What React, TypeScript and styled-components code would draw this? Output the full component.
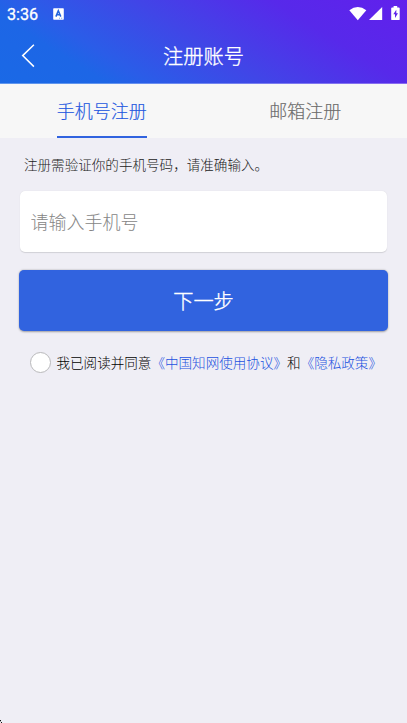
import React from "react";
import styled, { createGlobalStyle } from "styled-components";

const GlobalStyle = createGlobalStyle`
  *, *::before, *::after { box-sizing: border-box; }
  html, body, #root { height: 100%; }
  body {
    margin: 0;
    overflow: hidden;
    background: #efeef5;
    font-family: Roboto, "Noto Sans CJK SC", sans-serif;
  }
`;

const Page = styled.div`
  display: flex;
  flex-direction: column;
  height: 100%;
  background: #efeef5;
`;

const Header = styled.header`
  flex: none;
  height: 84px;
  display: flex;
  flex-direction: column;
  color: #fff;
  border-bottom: 1px solid rgba(255, 255, 255, 0.3);
  background: linear-gradient(32deg, #1a69e6 0%, #1d66e6 20%, #2a5de8 28%, #4145e7 50%, #5729ea 75%, #6120ec 100%);
  background-origin: border-box;
`;

const StatusBar = styled.div`
  height: 28px;
  display: flex;
  align-items: center;
  padding: 0 5px 0 7px;
`;

const Clock = styled.span`
  width: 46px;
  font-size: 16.2px;
  font-weight: 400;
  line-height: 28px;
  padding-top: 1px;
  -webkit-text-stroke: 0.3px currentColor;
`;

const StatusIcons = styled.div`
  display: flex;
  align-items: center;
  margin-left: auto;
  height: 28px;
`;

const TitleBar = styled.div`
  height: 56px;
  display: grid;
  grid-template-columns: 60px 1fr 60px;
  align-items: center;
`;

const BackButton = styled.button`
  display: flex;
  padding: 0 0 0 21px;
  border: 0;
  color: inherit;
  background: none;
`;

const Title = styled.h1`
  margin: 0;
  padding-top: 2px;
  font-size: 20.2px;
  font-weight: 300;
  line-height: 54px;
  text-align: center;
  -webkit-text-stroke: 0.35px currentColor;
`;

const Tabs = styled.nav`
  flex: none;
  height: 54px;
  display: grid;
  grid-template-columns: 1fr 1fr;
  justify-items: center;
  background: #f7f7f7;
`;

const Tab = styled.button<{ $active?: boolean }>`
  height: 54px;
  padding: 3px 0 0;
  border: 0;
  border-bottom: 2px solid ${(p) => (p.$active ? "#3163df" : "transparent")};
  background: none;
  font-family: inherit;
  font-size: 18px;
  font-weight: 300;
  line-height: 49px;
  color: ${(p) => (p.$active ? "#2458df" : "#6c6c6c")};
  -webkit-text-stroke: 0.15px currentColor;
`;

const Form = styled.main`
  display: flex;
  flex-direction: column;
  padding: 0 19px;
`;

const Hint = styled.p`
  margin: 15px 0 15px 5px;
  font-size: 13.57px;
  font-weight: 300;
  line-height: 24px;
  color: #222;
`;

const PhoneInput = styled.input`
  height: 61px;
  margin: -1px 0 0 1px;
  width: 367px;
  padding: 2px 10.5px 0;
  border: 0;
  border-radius: 5px;
  outline: none;
  background: #fff;
  box-shadow: 0 0.5px 1px rgba(0, 0, 0, 0.13);
  font-family: inherit;
  font-size: 18px;
  font-weight: 300;
  color: #333;
  &::placeholder {
    color: #858585;
    opacity: 1;
  }
`;

const NextButton = styled.button`
  height: 61px;
  margin-top: 18px;
  padding: 0;
  border: 0;
  border-radius: 5px;
  background: #3163df;
  box-shadow: 0 0.5px 2px rgba(0, 0, 0, 0.34);
  font-family: inherit;
  font-size: 20.2px;
  font-weight: 300;
  color: #fff;
  -webkit-text-stroke: 0.35px currentColor;
`;

const Agreement = styled.label`
  display: flex;
  align-items: center;
  height: 24px;
  margin: 20px 0 0 11px;
  font-size: 13.57px;
  font-weight: 300;
  line-height: 24px;
  white-space: nowrap;
  color: #000;
`;

const Radio = styled.span`
  flex: none;
  width: 21px;
  height: 21px;
  margin: -2px 5.5px 0 0;
  border: 1px solid #b9b9bb;
  border-radius: 50%;
  background: #fff;
`;

const Link = styled.span`
  color: #1c52e0;
`;

const CornerMark = styled.svg`
  position: fixed;
  left: 0;
  bottom: 0;
`;

const InputMethodIcon = () => (
  <svg width="11" height="12" viewBox="0 0 11 12">
    <rect x="0.2" y="0.3" width="10.6" height="11.4" rx="0.7" fill="#fff" />
    <path d="M2.9 8.6 5.3 2.7 7.8 8.6M3.8 6.7h3" fill="none" stroke="#2465dc" strokeWidth="1.5" />
    <path d="M6.2 10.2h.8M8.2 10.2h1" stroke="#2465dc" strokeWidth="0.7" />
  </svg>
);

const StatusGlyphs = () => (
  <svg width="53" height="16" viewBox="0 0 53 16" fill="#fff">
    <path d="M0.3 4.2Q8.8-2.1 17.3 4.2L8.8 14.2Z" />
    <path d="M33.2 1v13.1H20z" />
    <path
      fillRule="evenodd"
      d="M44.6 0h3.6v1.4h1.6q.9 0 .9.9v10.9q0 .9-.9.9h-6.7q-.9 0-.9-.9V2.3q0-.9.9-.9h1.5zM47.3 3.7 44.3 8.3h1.7v3.6l3-4.7h-1.7z"
    />
  </svg>
);

export default function App() {
  return (
    <>
      <GlobalStyle />
      <Page>
        <Header>
          <StatusBar>
            <Clock>3:36</Clock>
            <InputMethodIcon />
            <StatusIcons>
              <StatusGlyphs />
            </StatusIcons>
          </StatusBar>
          <TitleBar>
            <BackButton aria-label="返回">
              <svg width="14" height="24" viewBox="0 0 14 24" fill="none" stroke="currentColor" strokeWidth="1.5">
                <path d="M12.9 .8 1.7 11.6l11.2 11" />
              </svg>
            </BackButton>
            <Title>注册账号</Title>
          </TitleBar>
        </Header>
        <Tabs>
          <Tab $active>手机号注册</Tab>
          <Tab>邮箱注册</Tab>
        </Tabs>
        <Form>
          <Hint>注册需验证你的手机号码，请准确输入。</Hint>
          <PhoneInput type="tel" placeholder="请输入手机号" />
          <NextButton>下一步</NextButton>
          <Agreement>
            <Radio />
            <span>
              我已阅读并同意<Link>《中国知网使用协议》</Link>和<Link>《隐私政策》</Link>
            </span>
          </Agreement>
        </Form>
        <CornerMark width="2" height="3" viewBox="0 0 2 3">
          <path d="M0 0h1v1H0zM1 2h1v1H1z" fill="#111" />
          <path d="M0 1h1v1H0z" fill="#aaa" />
        </CornerMark>
      </Page>
    </>
  );
}
